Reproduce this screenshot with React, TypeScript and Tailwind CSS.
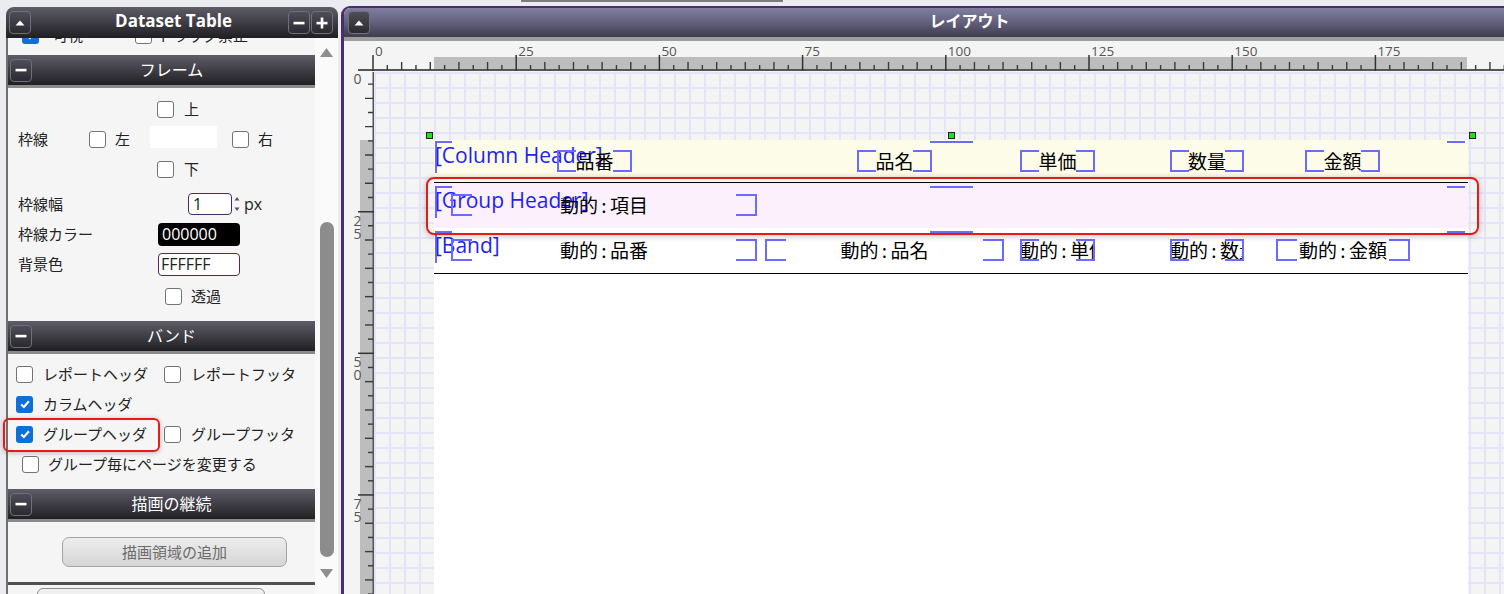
import React from 'react';

type BtnKind = 'up' | 'minus' | 'plus';

const HeadBtn = ({ kind }: { kind: BtnKind }) => (
  <span className="flex h-[23px] w-[22px] shrink-0 items-center justify-center rounded-[4px] border border-[#6c717d] bg-[linear-gradient(#4f4e58,#2b2a30)]">
    <svg viewBox="0 0 12 12" className="h-[12px] w-[12px]">
      {kind === 'up' && <path d="M1.5 8.5 6 3.5 10.5 8.5z" fill="#fff" />}
      {kind !== 'up' && <rect x="0.5" y="4.8" width="11" height="2.6" fill="#fff" />}
      {kind === 'plus' && <rect x="4.7" y="0.5" width="2.6" height="11" fill="#fff" />}
    </svg>
  </span>
);

const Check = ({ on }: { on?: boolean }) =>
  on ? (
    <span className="flex h-[17px] w-[17px] shrink-0 items-center justify-center rounded-[3px] bg-[#0e6fd8]">
      <svg viewBox="0 0 12 12" className="h-[12px] w-[12px]">
        <path d="M2.2 6.4 4.9 9 9.9 3.2" fill="none" stroke="#fff" strokeWidth="2.1" />
      </svg>
    </span>
  ) : (
    <span className="block h-[17px] w-[17px] shrink-0 rounded-[3px] border-[1.5px] border-[#737373] bg-white" />
  );

const Section = ({ title }: { title: string }) => (
  <div className="flex h-[33px] shrink-0 items-center border-b-[3px] border-[#8b8b8b] bg-[linear-gradient(#5f5d67,#202024)] pl-[2px]">
    <HeadBtn kind="minus" />
    <span className="flex-1 pb-[2px] pr-[4px] text-center text-[16px] leading-none text-white">{title}</span>
  </div>
);

const DatasetPanel = () => (
  <div className="ml-[6px] mt-[1px] flex w-[332px] shrink-0 flex-col">
    <div className="relative flex h-[31px] shrink-0 items-center justify-between rounded-t-[8px] bg-[linear-gradient(#5e5c66,#1f1f23)] pl-[3px] pr-[5px]">
      <HeadBtn kind="up" />
      <span className="absolute inset-0 flex items-center justify-center pb-[4px] pl-[3px] font-[family-name:'Open_Sans',sans-serif] text-[17px] font-bold text-white">
        Dataset Table
      </span>
      <span className="relative flex gap-[1px]">
        <HeadBtn kind="minus" />
        <HeadBtn kind="plus" />
      </span>
    </div>

    <div className="flex flex-1">
      <div className="flex w-[309px] shrink-0 flex-col border-l-2 border-[#707070] bg-[#f5f5f5] text-[15px] text-[#222]">
        {/* row scrolled half out of view */}
        <div className="h-[17px] shrink-0 overflow-hidden">
          <div className="-mt-[18px] flex h-[30px] items-center pl-[14px]">
            <Check on />
            <span className="ml-[14px] w-[82px]">可視</span>
            <Check />
            <span className="ml-[6px]">ドラッグ禁止</span>
          </div>
        </div>

        <Section title="フレーム" />
        <div className="flex shrink-0 flex-col pb-[10px] pt-[6px]">
          <div className="flex h-[30px] items-center pl-[149px]">
            <Check />
            <span className="ml-[10px]">上</span>
          </div>
          <div className="flex h-[30px] items-center pl-[10px]">
            <span className="w-[71px]">枠線</span>
            <Check />
            <span className="ml-[9px] w-[35px]">左</span>
            <span className="mb-[4px] h-[22px] w-[67px] bg-white" />
            <span className="ml-[15px] flex">
              <Check />
            </span>
            <span className="ml-[9px]">右</span>
          </div>
          <div className="flex h-[30px] items-center pl-[149px]">
            <Check />
            <span className="ml-[10px]">下</span>
          </div>
          <div className="mt-[5px] flex h-[30px] items-center pl-[10px]">
            <span className="w-[170px]">枠線幅</span>
            <span className="flex h-[22px] w-[44px] items-center rounded-[4px] border border-[#4b2a66] bg-white pl-[4px] font-[family-name:'Open_Sans',sans-serif] text-[16px]">
              1
            </span>
            <svg viewBox="0 0 6 16" className="ml-[2px] h-[16px] w-[6px]">
              <path d="M0.5 4.5 3 1 5.5 4.5z M0.5 11.5 3 15 5.5 11.5z" fill="#555" />
            </svg>
            <span className="ml-[4px] font-[family-name:'Open_Sans',sans-serif] text-[16px]">px</span>
          </div>
          <div className="flex h-[30px] items-center pl-[10px]">
            <span className="w-[140px]">枠線カラー</span>
            <span className="flex h-[23px] w-[82px] items-center rounded-[4px] bg-black pl-[4px] font-[family-name:'Open_Sans',sans-serif] text-[16px] text-white">
              000000
            </span>
          </div>
          <div className="flex h-[30px] items-center pl-[10px]">
            <span className="w-[140px]">背景色</span>
            <span className="flex h-[23px] w-[82px] items-center rounded-[4px] border border-[#4b2a66] bg-white pl-[2px] font-[family-name:'Open_Sans',sans-serif] text-[16px]">
              FFFFFF
            </span>
          </div>
          <div className="mt-[2px] flex h-[30px] items-center pl-[157px]">
            <Check />
            <span className="ml-[9px]">透過</span>
          </div>
        </div>

        <Section title="バンド" />
        <div className="flex shrink-0 flex-col pb-[9px] pt-[5px]">
          <div className="flex h-[30px] items-center pl-[8px]">
            <span className="flex w-[148px] items-center">
              <Check />
              <span className="ml-[10px]">レポートヘッダ</span>
            </span>
            <Check />
            <span className="ml-[10px]">レポートフッタ</span>
          </div>
          <div className="flex h-[30px] items-center pl-[8px]">
            <Check on />
            <span className="ml-[10px]">カラムヘッダ</span>
          </div>
          <div className="flex h-[30px] items-center pl-[8px]">
            <span className="flex w-[148px] items-center">
              <Check on />
              <span className="ml-[10px]">グループヘッダ</span>
            </span>
            <Check />
            <span className="ml-[10px]">グループフッタ</span>
          </div>
          <div className="flex h-[30px] items-center pl-[14px]">
            <Check />
            <span className="ml-[9px]">グループ毎にページを変更する</span>
          </div>
          <div className="h-[1px]" />
        </div>

        <Section title="描画の継続" />
        <div className="h-[60px] shrink-0 pl-[54px] pt-[15px]">
          <button className="flex h-[30px] w-[225px] items-center justify-center rounded-[7px] border border-[#a3a3a3] bg-[linear-gradient(#ededed,#d5d5d5)] text-[15px] text-[#6b6b6b]">
            描画領域の追加
          </button>
        </div>
        <div className="h-[3px] shrink-0 bg-[#505050]" />
        <div className="flex flex-1 items-start pt-[3px]">
          <span className="ml-[29px] h-[12px] w-[228px] rounded-full border border-[#8e8e8e] bg-[#f0f0f0]" />
        </div>
      </div>

      {/* vertical scroll bar */}
      <div className="flex w-[23px] shrink-0 flex-col items-center bg-[#fafafa]">
        <svg viewBox="0 0 13 9" className="mt-[10px] h-[9px] w-[13px]">
          <path d="M0 9 6.5 0 13 9z" fill="#8e8e8e" />
        </svg>
        <span className="mt-[165px] h-[335px] w-[14px] rounded-full bg-[#8c8c8c]" />
        <svg viewBox="0 0 13 9" className="mt-[12px] h-[9px] w-[13px]">
          <path d="M0 0 6.5 9 13 0z" fill="#8e8e8e" />
        </svg>
      </div>
    </div>
  </div>
);

// ruler scale: 25 units = 143.2px across, 141.65px down
const TopRuler = () => {
  const marks = [];
  for (let i = 0; i <= 80; i++) {
    const u = i * 2.5;
    const x = 29 + u * 5.728;
    if (u % 25 === 0) {
      marks.push(
        <g key={i}>
          <line x1={x} x2={x} y1={14} y2={30} stroke="#333" strokeWidth={1.5} />
          <text x={x + 2} y={15} fontSize={13.5} fill="#555" fontFamily="Open Sans, sans-serif">
            {u}
          </text>
        </g>,
      );
    } else {
      const top = u % 5 === 0 ? 21 : 24;
      marks.push(<line key={i} x1={x} x2={x} y1={top} y2={29} stroke="#3a3a3a" strokeWidth={1.4} />);
    }
  }
  return (
    <svg width={1160} height={31} className="block shrink-0">
      <rect x={90} y={16} width={1033} height={12} fill="#bdbdbd" />
      <rect x={14} y={28} width={1146} height={2} fill="#555" />
      {marks}
    </svg>
  );
};

const LeftRuler = () => {
  const marks = [];
  for (let i = 0; i <= 37; i++) {
    const u = i * 2.5;
    const y = -2 + u * 5.666;
    if (u % 25 === 0) {
      marks.push(
        <g key={i}>
          <line x1={14} x2={30} y1={y} y2={y} stroke="#333" strokeWidth={1.5} />
          {String(u)
            .split('')
            .map((d, k) => (
              <text key={k} x={13.5} y={y + 14 + k * 13} fontSize={14} fill="#555" textAnchor="middle" fontFamily="Open Sans, sans-serif">
                {d}
              </text>
            ))}
        </g>,
      );
    } else {
      const left = u % 5 === 0 ? 21 : 24;
      marks.push(<line key={i} x1={left} x2={29} y1={y} y2={y} stroke="#3a3a3a" strokeWidth={1.4} />);
    }
  }
  return (
    <svg width={30} height={522} className="block shrink-0">
      <rect x={16} y={68} width={13} height={454} fill="#bdbdbd" />
      <rect x={28.5} y={0} width={1.5} height={522} fill="#555" />
      {marks}
    </svg>
  );
};

type FieldDef = { x: number; w: number; text: string };

const colFields: FieldDef[] = [
  { x: 123, w: 75, text: '品番' },
  { x: 423, w: 75, text: '品名' },
  { x: 586, w: 75, text: '単価' },
  { x: 736, w: 74, text: '数量' },
  { x: 871, w: 75, text: '金額' },
];

const groupFields: FieldDef[] = [{ x: 17, w: 306, text: '動的:項目' }];

const detailFields: FieldDef[] = [
  { x: 17, w: 306, text: '動的:品番' },
  { x: 331, w: 239, text: '動的:品名' },
  { x: 586, w: 75, text: '動的:単価' },
  { x: 736, w: 74, text: '動的:数量' },
  { x: 842, w: 134, text: '動的:金額' },
];

const FieldText = ({ text }: { text: string }) => {
  const [a, b] = text.split(':');
  if (b === undefined) return <>{a}</>;
  return (
    <>
      {a}
      <span className="inline-block w-[12px] text-center">:</span>
      {b}
    </>
  );
};

const Field = ({ f, top }: { f: FieldDef; top: number }) => {
  const arm = Math.min(21, Math.round(f.w / 4));
  return (
    <div
      className="absolute h-[22px] overflow-hidden whitespace-nowrap text-center text-[19px] leading-[22px] text-black"
      style={{ left: f.x, top, width: f.w }}
    >
      <FieldText text={f.text} />
      <span className="absolute left-0 top-0 h-full border-y-2 border-l-2 border-[#6b6bff]" style={{ width: arm }} />
      <span className="absolute right-0 top-0 h-full border-y-2 border-r-2 border-[#6b6bff]" style={{ width: arm }} />
    </div>
  );
};

const BandMarks = ({ top, label }: { top: number; label: string }) => (
  <>
    <span className="absolute left-[1px] h-[32px] w-[17px] border-l-2 border-t-2 border-[#6b6bff]" style={{ top }} />
    <span className="absolute left-[496px] h-[2px] w-[43px] bg-[#6b6bff]" style={{ top }} />
    <span className="absolute left-[1013px] h-[2px] w-[18px] bg-[#6b6bff]" style={{ top }} />
    <span
      className="absolute left-[1px] whitespace-nowrap font-[family-name:'Open_Sans',sans-serif] text-[21px] leading-[28px] text-[#1f1ff5]"
      style={{ top: top }}
    >
      {label}
    </span>
  </>
);

const Canvas = () => (
  <div className="relative flex-1 overflow-hidden bg-[linear-gradient(to_right,#e4e4f8_2px,transparent_2px),linear-gradient(to_bottom,#e4e4f8_2px,transparent_2px)] bg-[size:15px_15px]">
    <div className="ml-[60px] mt-[68px] h-[454px] w-[1034px] bg-white">
      <div className="relative h-[43px] border-b border-black bg-[#fcfce8]">
        <BandMarks top={1} label="[Column Header]" />
        {colFields.map((f) => (
          <Field key={f.text} f={f} top={10} />
        ))}
      </div>
      <div className="relative h-[45px] bg-[#fcf0fc]">
        <BandMarks top={3} label="[Group Header]" />
        {groupFields.map((f) => (
          <Field key={f.text} f={f} top={11} />
        ))}
      </div>
      <div className="relative h-[46px] border-b border-black bg-white">
        <BandMarks top={3} label="[Band]" />
        {detailFields.map((f) => (
          <Field key={f.text} f={f} top={11} />
        ))}
      </div>
    </div>

    {/* selection handles */}
    <span className="absolute left-[52px] top-[60px] h-[7px] w-[7px] border border-[#222] bg-[#22dd22]" />
    <span className="absolute left-[574px] top-[60px] h-[7px] w-[7px] border border-[#222] bg-[#22dd22]" />
    <span className="absolute left-[1095px] top-[60px] h-[7px] w-[7px] border border-[#222] bg-[#22dd22]" />

    <div className="pointer-events-none absolute left-[52px] top-[105px] h-[58px] w-[1053px] rounded-[8px] border-2 border-[#e51b1b] shadow-[0_1px_6px_rgba(0,0,0,0.25)]" />
  </div>
);

const LayoutPanel = () => (
  <div className="ml-[3px] flex flex-1 flex-col overflow-hidden rounded-tl-[9px] border-l-[3px] border-t-2 border-[#4b2d6b] bg-[#f4f4f4]">
    <div className="flex h-[29px] shrink-0 items-center bg-[linear-gradient(#817fa0,#5f5d78_55%,#3e3c4e)]">
      <span className="ml-[4px]">
        <HeadBtn kind="up" />
      </span>
      <span className="flex-1 pb-[5px] pl-[65px] text-center text-[16px] font-bold leading-none text-white">レイアウト</span>
    </div>
    <div className="h-[4px] shrink-0 bg-[#9e9e9e]" />
    <TopRuler />
    <div className="flex flex-1">
      <LeftRuler />
      <Canvas />
    </div>
  </div>
);

export default function App() {
  return (
    <div className="relative h-[594px] w-[1504px] overflow-hidden bg-[#eaecf0] font-[family-name:'Noto_Sans_CJK_JP',sans-serif] text-[#222]">
      <div className="flex h-[6px]">
        <div className="ml-[521px] h-[2px] w-[262px] bg-[#7c7c7c]" />
      </div>
      <div className="flex h-[588px]">
        <DatasetPanel />
        <LayoutPanel />
      </div>
      <div className="pointer-events-none absolute left-[3px] top-[418px] h-[34px] w-[157px] rounded-[6px] border-2 border-[#e51b1b] shadow-[0_1px_5px_rgba(0,0,0,0.25)]" />
    </div>
  );
}
